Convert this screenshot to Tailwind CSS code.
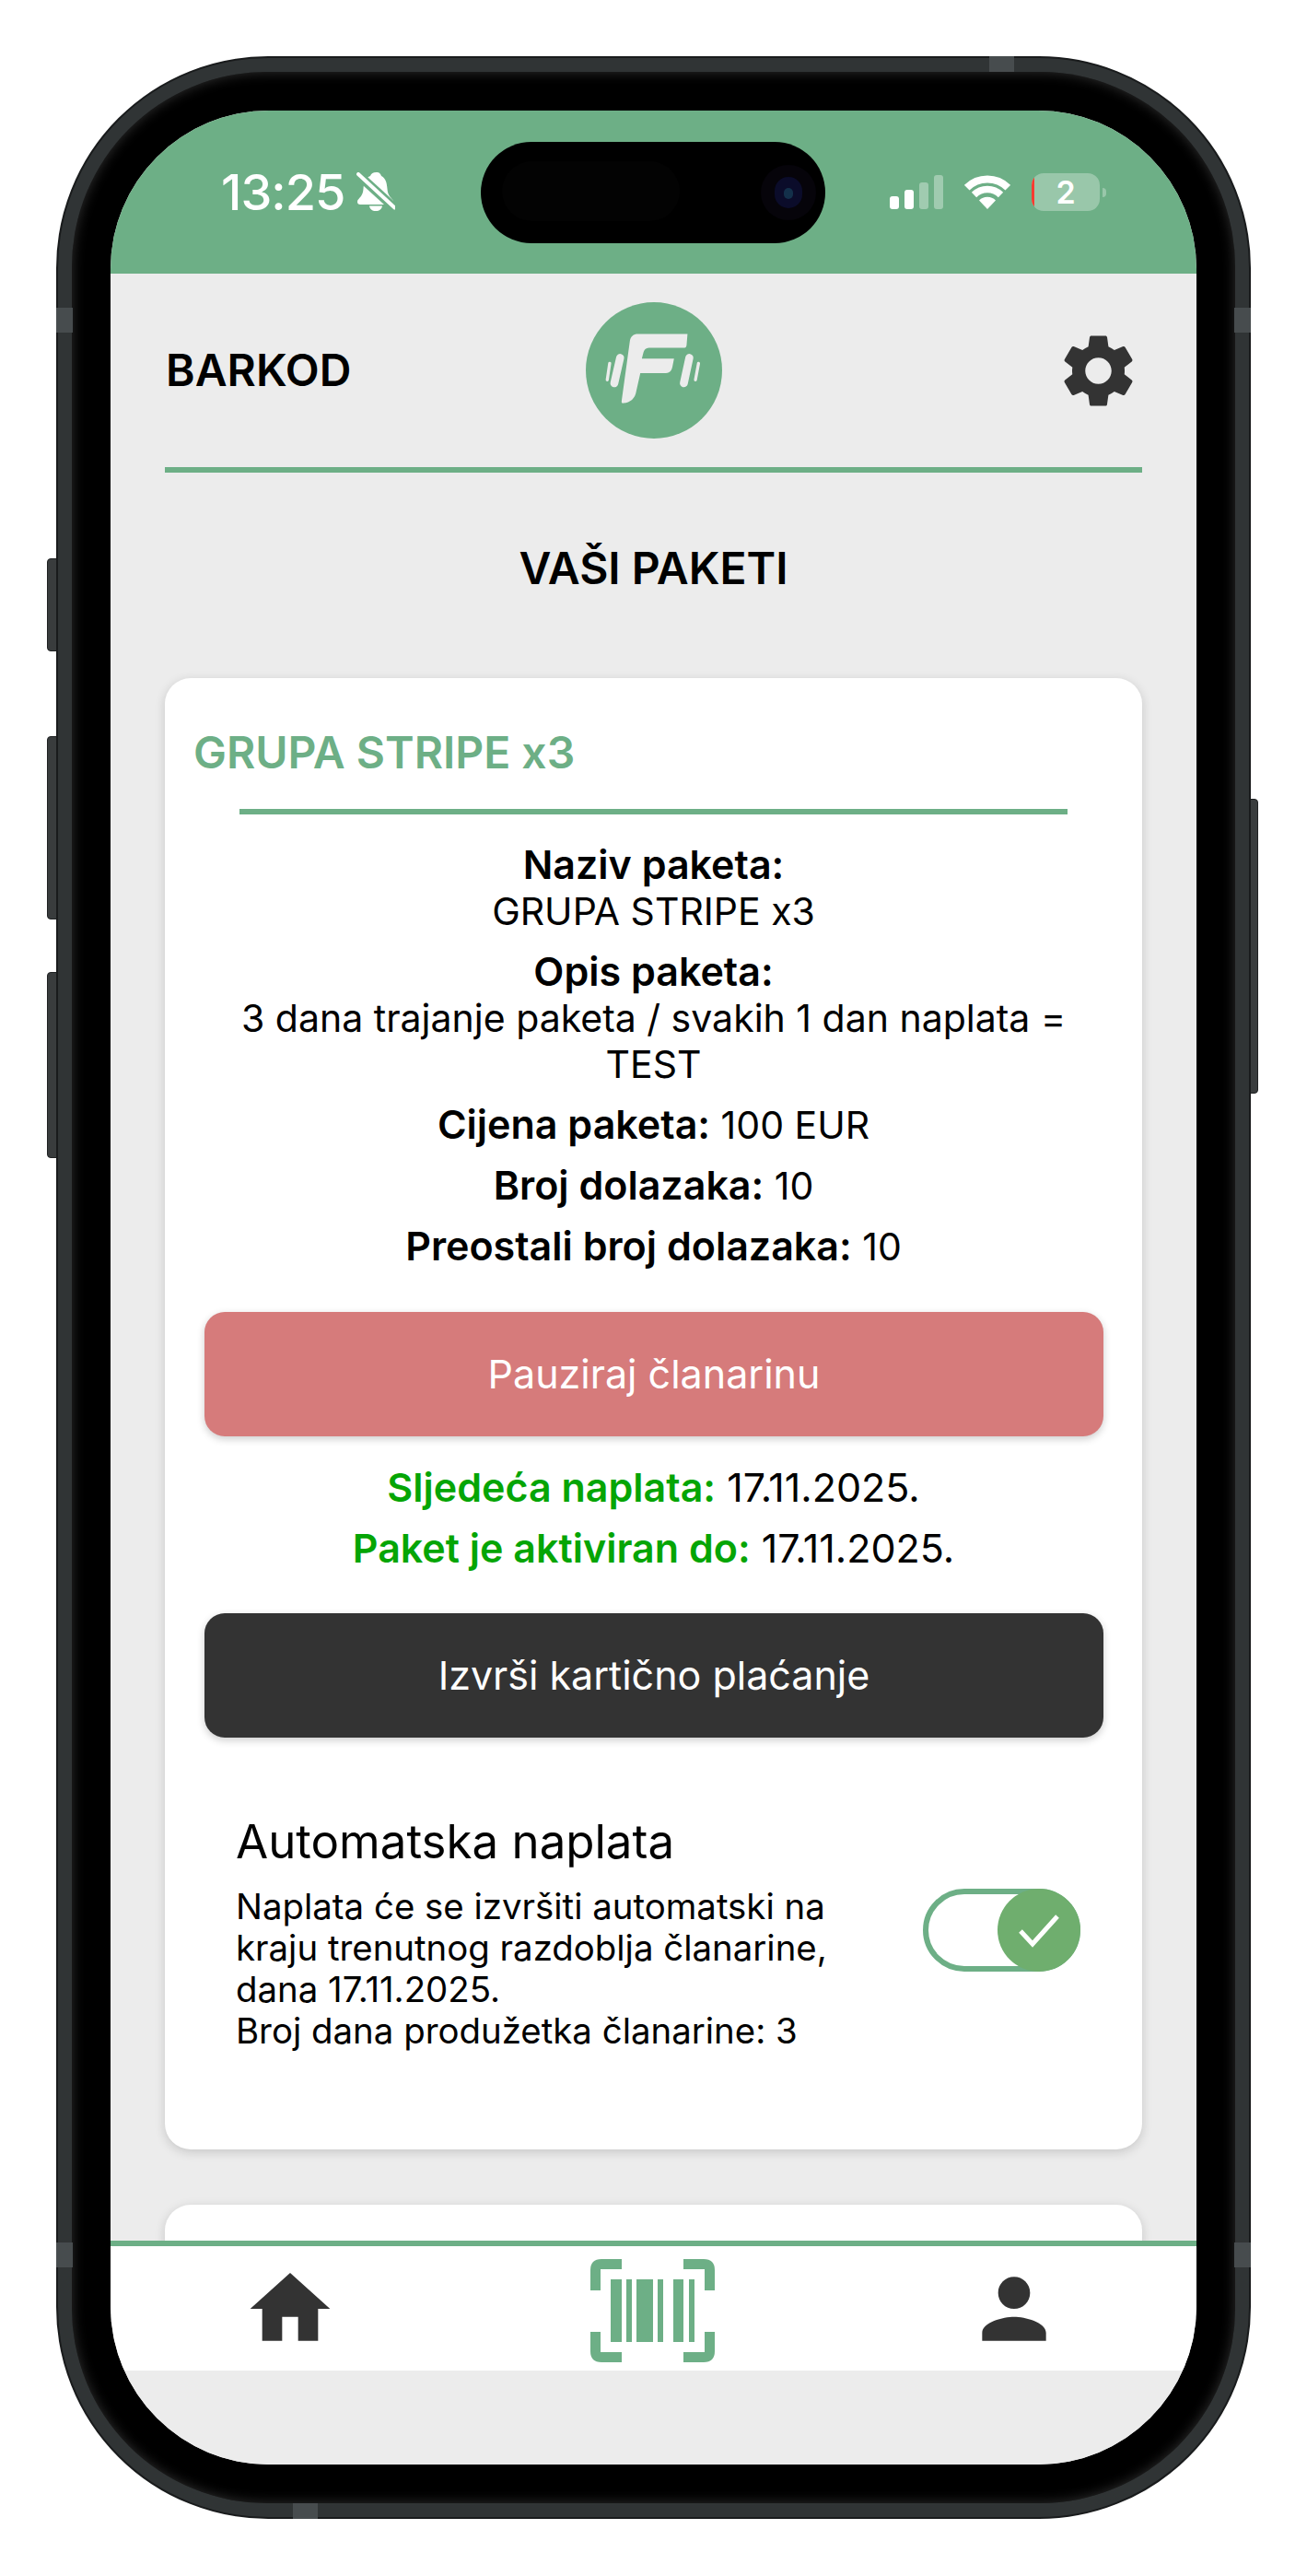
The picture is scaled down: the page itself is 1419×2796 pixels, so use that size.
<!DOCTYPE html>
<html lang="bs">
<head>
  <meta charset="UTF-8" />
  <meta name="viewport" content="width=device-width, initial-scale=1.0"/>
  <title>Vaši paketi</title>
  <script src="https://cdn.jsdelivr.net/npm/@tailwindcss/browser@4"></script>
</head>
<body class="bg-white [font-family:Inter,sans-serif] text-black">
  <div class="h-[2796px] w-[1419px] overflow-hidden pt-[61px] pl-[61px]">

    <!-- Phone frame -->
    <div class="relative w-[1297px] h-[2673px]">
      <!-- side buttons -->
      <div class="absolute left-[-10px] top-[545px] w-[11px] h-[101px] rounded-l-[4px] border border-[#1f2122] bg-[#393c3d]"></div>
      <div class="absolute left-[-10px] top-[738px] w-[11px] h-[199px] rounded-l-[4px] border border-[#1f2122] bg-[#393c3d]"></div>
      <div class="absolute left-[-10px] top-[994px] w-[11px] h-[202px] rounded-l-[4px] border border-[#1f2122] bg-[#393c3d]"></div>
      <div class="absolute right-[-8px] top-[806px] w-[9px] h-[320px] rounded-r-[4px] border border-[#1f2122] bg-[#393c3d]"></div>

      <div class="relative h-full rounded-[230px] border-2 border-[#191b1c] bg-[#303435] p-[15px]">
        <!-- antenna bands -->
        <div class="absolute left-[-2px] top-[271px] w-[18px] h-[27px] bg-[#474c4e]"></div>
        <div class="absolute right-[-2px] top-[271px] w-[18px] h-[27px] bg-[#474c4e]"></div>
        <div class="absolute left-[-2px] top-[2371px] w-[18px] h-[27px] bg-[#474c4e]"></div>
        <div class="absolute right-[-2px] top-[2371px] w-[18px] h-[27px] bg-[#474c4e]"></div>
        <div class="absolute left-[1011px] top-[-2px] w-[27px] h-[17px] bg-[#474c4e]"></div>
        <div class="absolute left-[255px] bottom-[-2px] w-[27px] h-[17px] bg-[#474c4e]"></div>

        <div class="h-full rounded-[212px] bg-black p-[42px] shadow-[inset_0_0_14px_rgba(70,70,70,0.7)]">

          <!-- Screen -->
          <div class="relative flex flex-col h-full overflow-hidden rounded-[172px] bg-[#ececec]">

            <!-- Status bar -->
            <div class="relative flex items-center justify-between h-[177px] shrink-0 bg-[#6daf86] pl-[120px] pr-[98px] text-white">
              <div class="flex items-center gap-[13px]">
                <span class="text-[54px] leading-none font-medium tracking-[-1px]">13:25</span>
                <svg class="w-[42px] h-[43px]" viewBox="0 0 42 43">
                  <path fill="#fff" d="M21.500 0C18 0 16 1.500 15 4 9 6.500 8 12 7.500 18 7 25 4 27 1.500 30 .5 32 1 35 4 35H37C40 35 41 32 39.500 30 37 27 34 25 33.500 18 33 12 32 6.500 27 4 26 1.500 25 0 21.500 0zM14 36.500H28C27.500 40 25 42 21 42 17 42 14.500 40 14 36.500z"/>
                  <path stroke="#6daf86" stroke-width="10" d="M-1 0 44 41"/>
                  <path stroke="#fff" stroke-width="4" stroke-linecap="round" d="M2 2 41.500 38.500"/>
                </svg>
              </div>
              <div class="flex items-center gap-[23px]">
                <svg class="w-[58px] h-[37px]" viewBox="0 0 58 37">
                  <rect x="0" y="23" width="10" height="14" rx="3" fill="#fff"/>
                  <rect x="16" y="16" width="10" height="21" rx="3" fill="#fff"/>
                  <rect x="32" y="8" width="10" height="29" rx="3" fill="#fff" fill-opacity="0.35"/>
                  <rect x="48" y="0" width="10" height="37" rx="3" fill="#fff" fill-opacity="0.35"/>
                </svg>
                <svg class="w-[50px] h-[37px]" viewBox="0 0 50 37" fill="none" stroke="#fff">
                  <path stroke-width="8" d="M2.700 13.700a31.500 31.500 0 0 1 44.600 0"/>
                  <path stroke-width="7.500" d="M10.500 21.500a20.500 20.500 0 0 1 29 0"/>
                  <path fill="#fff" stroke="none" d="M16 27.500a12.700 12.700 0 0 1 18 0L25 37z"/>
                </svg>
                <div class="flex items-center gap-[3px]">
                  <div class="relative flex items-center justify-center w-[74px] h-[41px] overflow-hidden rounded-[13px] bg-white/30">
                    <div class="absolute left-0 top-0 h-full w-[3px] bg-[#ff3b30]"></div>
                    <span class="text-[34px] leading-none font-semibold">2</span>
                  </div>
                  <div class="w-[4px] h-[10px] rounded-r-[4px] bg-white/30"></div>
                </div>
              </div>
              <!-- Dynamic island -->
              <div class="absolute left-[402px] top-[34px] w-[374px] h-[110px] rounded-[55px] bg-black">
                <div class="absolute left-[23px] top-[21px] w-[193px] h-[65px] rounded-[33px] bg-[#030303]"></div>
                <div class="absolute left-[304px] top-[25px] w-[60px] h-[60px] rounded-full bg-[#06040a]"></div>
                <div class="absolute left-[319px] top-[38px] w-[30px] h-[34px] rounded-full bg-[#0b0c2a]"></div>
                <div class="absolute left-[329px] top-[50px] w-[10px] h-[12px] rounded-full bg-[#13304a]"></div>
              </div>
            </div>

            <!-- Scrolling content -->
            <div class="flex-1 min-h-0 overflow-hidden px-[59px]">
              <div class="flex items-center justify-between h-[210px] pl-[1px] border-b-[6px] border-[#6daf86] box-content">
                <span class="w-[240px] text-[48px] leading-none font-semibold">BARKOD</span>
                <svg class="w-[148px] h-[148px]" viewBox="105 85 445 442">
                  <circle cx="327.500" cy="306" r="222.500" fill="#6daf86"/>
                  <path fill="#ececec" d="M437 187H275c-14 0-24 8-26 22L222 405c-1 6 1 9 6 8 22-2 38-14 42-40l13-58h78c16 0 24-6 27-22l5-25H288l5-20c2-9 8-16 18-16h116c5 0 6-3 7-8z"/>
                  <g stroke="#ececec" stroke-linecap="round">
                    <path stroke-width="26" d="M217 265 198 348M443 265 425 348"/>
                    <path stroke-width="10" d="M183 283 175 337M473 283 463 337"/>
                  </g>
                </svg>
                <div class="flex justify-end w-[240px]">
                  <svg class="w-[95px] h-[95px]" viewBox="0 0 24 24" fill="#333">
                    <path d="M19.140,12.940c0.040-0.300,0.060-0.610,0.060-0.940c0-0.320-0.020-0.640-0.070-0.940l2.030-1.580c0.180-0.140,0.230-0.410,0.120-0.610l-1.920-3.320c-0.120-0.220-0.370-0.290-0.590-0.220l-2.390,0.960c-0.500-0.380-1.030-0.700-1.620-0.940L14.400,2.810c-0.040-0.240-0.240-0.410-0.480-0.410h-3.840c-0.240,0-0.430,0.170-0.470,0.410L9.250,5.350C8.660,5.590,8.120,5.920,7.630,6.290L5.240,5.330c-0.220-0.080-0.470,0-0.590,0.220L2.740,8.870C2.620,9.080,2.660,9.340,2.860,9.480l2.030,1.580C4.840,11.360,4.800,11.690,4.800,12s0.020,0.640,0.070,0.940l-2.030,1.580c-0.180,0.140-0.230,0.410-0.120,0.610l1.920,3.320c0.120,0.220,0.370,0.290,0.590,0.220l2.390-0.960c0.500,0.380,1.030,0.700,1.620,0.940l0.360,2.540c0.050,0.240,0.240,0.410,0.480,0.410h3.840c0.240,0,0.440-0.170,0.470-0.410l0.360-2.540c0.590-0.240,1.130-0.560,1.620-0.940l2.390,0.960c0.220,0.080,0.470,0,0.590-0.220l1.920-3.320c0.120-0.220,0.070-0.470-0.120-0.610L19.140,12.940z M12,15.600c-1.980,0-3.600-1.620-3.600-3.600s1.620-3.600,3.600-3.600s3.600,1.620,3.600,3.600S13.980,15.600,12,15.600z"/>
                  </svg>
                </div>
              </div>

              <h1 class="mt-[74px] mb-[89px] text-center text-[48px] leading-[60px] font-semibold">VAŠI PAKETI</h1>

              <!-- Package card -->
              <div class="h-[1597px] rounded-[28px] bg-white px-[33px] pt-[51px] shadow-[0_3px_12px_rgba(0,0,0,0.16)]">
                <h2 class="-ml-[2px] text-[48px] leading-[60px] font-semibold text-[#6daf86]">GRUPA STRIPE x3</h2>
                <div class="mx-[48px] mt-[31px] h-[6px] bg-[#6daf86]"></div>

                <div class="mt-[30px] flex flex-col gap-[16px] text-center text-[41px] leading-[50px]">
                  <p><strong class="text-[43px] leading-none font-semibold">Naziv paketa:</strong><br>GRUPA STRIPE x3</p>
                  <p><strong class="text-[43px] leading-none font-semibold">Opis paketa:</strong><br>3 dana trajanje paketa / svakih 1 dan naplata = TEST</p>
                  <p><strong class="text-[43px] leading-none font-semibold">Cijena paketa:</strong> 100 EUR</p>
                  <p><strong class="text-[43px] leading-none font-semibold">Broj dolazaka:</strong> 10</p>
                  <p><strong class="text-[43px] leading-none font-semibold">Preostali broj dolazaka:</strong> 10</p>
                </div>

                <button class="mx-[10px] mt-[46px] block w-[976px] h-[135px] rounded-[22px] bg-[#d67b7b] text-[43px] text-white shadow-[0_3px_8px_rgba(0,0,0,0.2)]">Pauziraj članarinu</button>

                <div class="mt-[30px] flex flex-col gap-[16px] text-center text-[43px] leading-[50px]">
                  <p><strong class="font-semibold text-[#05a505]">Sljedeća naplata:</strong> 17.11.2025.</p>
                  <p><strong class="font-semibold text-[#05a505]">Paket je aktiviran do:</strong> 17.11.2025.</p>
                </div>

                <button class="mx-[10px] mt-[46px] block w-[976px] h-[135px] rounded-[22px] bg-[#333] text-[43px] text-white shadow-[0_3px_8px_rgba(0,0,0,0.2)]">Izvrši kartično plaćanje</button>

                <div class="mt-[83px] flex items-start pl-[44px] pr-[34px]">
                  <div class="flex-1">
                    <h3 class="text-[51px] leading-[60px]">Automatska naplata</h3>
                    <p class="mt-[18px] w-[680px] text-[38.400px] leading-[45px]">Naplata će se izvršiti automatski na kraju trenutnog razdoblja članarine, dana 17.11.2025.<br>Broj dana produžetka članarine: 3</p>
                  </div>
                  <!-- Toggle -->
                  <div class="relative mt-[81px] w-[171px] h-[90px] shrink-0 rounded-[45px] border-[6px] border-[#6daf86]">
                    <div class="absolute right-[-6px] top-[-6px] flex items-center justify-center w-[90px] h-[90px] rounded-full bg-[#6fae6e]">
                      <svg class="w-[46px] h-[46px]" viewBox="0 0 46 46" fill="none" stroke="#fff" stroke-width="5"><path d="M3 24 16 38 43 8"/></svg>
                    </div>
                  </div>
                </div>
              </div>

              <div class="mt-[60px] h-[300px] rounded-[28px] bg-white shadow-[0_3px_12px_rgba(0,0,0,0.16)]"></div>
            </div>

            <!-- Bottom nav -->
            <nav class="grid grid-cols-3 items-center justify-items-center h-[141px] shrink-0 border-t-[6px] border-[#6daf86] bg-white">
              <svg class="w-[104px] h-[104px] -ml-[3px]" viewBox="0 0 24 24" fill="#333"><path d="M10 20v-6h4v6h5v-8h3L12 3 2 12h3v8z"/></svg>
              <svg class="w-[160px] h-[130px]" viewBox="0 0 160 130" fill="#6daf86">
                <path d="M45 11H23Q11 11 11 23V45H22V22H45zM112 11h22q12 0 12 12V45H135V22H112zM45 123H23Q11 123 11 111V90H22V112H45zM112 123h22q12 0 12-12V90H135V112H112z"/>
                <path d="M33 33h12v68H33zM50 33h6v68h-6zM61 33h18v68H61zM84 33h6v68h-6zM101 33h11v68h-11zM118 33h6v68h-6z"/>
              </svg>
              <svg class="w-[104px] h-[104px] -ml-[3px]" viewBox="0 0 24 24" fill="#333"><path d="M12 12c2.210 0 4-1.790 4-4s-1.790-4-4-4-4 1.790-4 4 1.790 4 4 4zm0 2c-2.670 0-8 1.340-8 4v2h16v-2c0-2.660-5.330-4-8-4z"/></svg>
            </nav>
            <div class="h-[102px] shrink-0 bg-[#ececec]"></div>
          </div>
        </div>
      </div>
    </div>
  </div>
</body>
</html>
